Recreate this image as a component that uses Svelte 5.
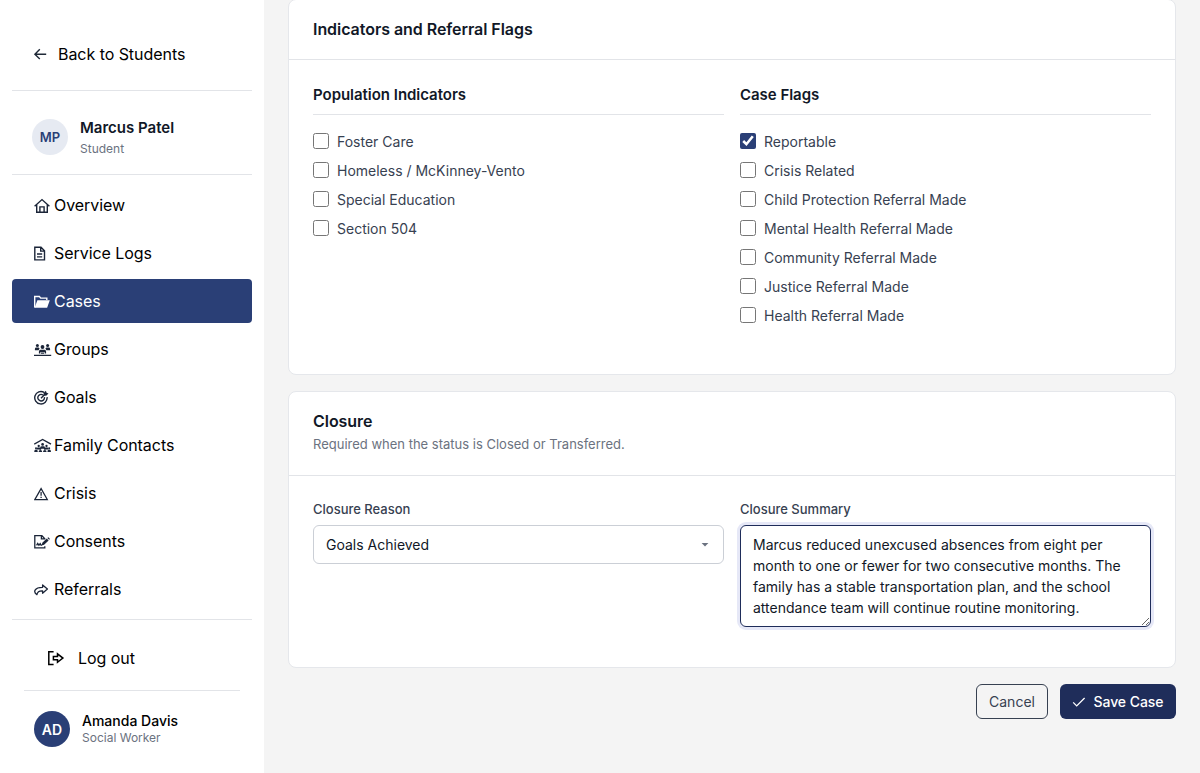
<script lang="ts">
  const nav = [
    { label: 'Overview', icon: 'home' },
    { label: 'Service Logs', icon: 'file' },
    { label: 'Cases', icon: 'folder' },
    { label: 'Groups', icon: 'groups' },
    { label: 'Goals', icon: 'goal' },
    { label: 'Family Contacts', icon: 'family' },
    { label: 'Crisis', icon: 'warning' },
    { label: 'Consents', icon: 'sign' },
    { label: 'Referrals', icon: 'share' }
  ];
  let active = $state('Cases');
  let population = $state([
    { label: 'Foster Care', on: false },
    { label: 'Homeless / McKinney-Vento', on: false },
    { label: 'Special Education', on: false },
    { label: 'Section 504', on: false }
  ]);
  let flags = $state([
    { label: 'Reportable', on: true },
    { label: 'Crisis Related', on: false },
    { label: 'Child Protection Referral Made', on: false },
    { label: 'Mental Health Referral Made', on: false },
    { label: 'Community Referral Made', on: false },
    { label: 'Justice Referral Made', on: false },
    { label: 'Health Referral Made', on: false }
  ]);
  let summary = $state(
    'Marcus reduced unexcused absences from eight per month to one or fewer for two consecutive months. The family has a stable transportation plan, and the school attendance team will continue routine monitoring.'
  );
</script>

{#snippet person(x: number, y: number, s: number)}
  <g transform="translate({x} {y}) scale({s})" fill="currentColor" stroke="none">
    <circle cx="0" cy="0" r="1.6" />
    <path d="M-2.8 5V3.8Q-2.8 2.1-1.1 2.1H1.1Q2.8 2.1 2.8 3.8V5Z" />
  </g>
{/snippet}

{#snippet icon(name: string)}
  <svg class="icon" width="18" height="17" viewBox="0 -1 18 17" fill="none" stroke="currentColor" stroke-width="1.4">
    {#if name === 'home'}
      <path d="M.6 8.3 8 1.6l7.4 6.7M2.7 6.8v7.5h10.6V6.8M5.9 14.2V8.9h4.2v5.3" />
    {:else if name === 'file'}
      <path d="M.8 1.3h6.2l3.5 3.5v9.1H.8ZM6.7 1.4v3.7h3.7M3 8h5.2M3 10.9h5.2" />
    {:else if name === 'folder'}
      <path d="M.7 13.4V2.5h4.7l1.3 1.6h6.1v2" />
      <path d="M.6 13.7 3.4 6.2h12.4L13.1 13.7Z" fill="currentColor" stroke="none" />
    {:else if name === 'groups'}
      <g fill="currentColor" stroke="none">
        <circle cx="3.4" cy="3.4" r="1.5" />
        <circle cx="13.6" cy="3.4" r="1.5" />
        <path d="M.9 8.3V6.9q0-1.4 1.4-1.4h2.3l1 1.1-1 1.7ZM16.1 8.3V6.9q0-1.4-1.4-1.4h-2.3l-1 1.1 1 1.7Z" />
        <circle cx="8.5" cy="5" r="1.9" />
        <path d="M4.9 11.6V9.4q0-1.7 1.7-1.7h3.8q1.7 0 1.7 1.7v2.2h-1.5V9.9H6.4v1.7Z" />
      </g>
      <path d="M7 11.2h3M0 13.3h17.2" stroke-width="1.3" />
    {:else if name === 'goal'}
      <path d="M10.1 2.4A6.2 6.2 0 1 0 13.1 7.1M8.8 4.8A3.3 3.3 0 1 0 10.4 7.2M7 8.2l4.4-4.4" />
      <path d="M9.6 5.5V3.1L11.9.8l.7 1.9 1.9.7L12.2 5.7Z" fill="currentColor" stroke="none" />
    {:else if name === 'family'}
      <path d="M.2 6.2 8.6 1.5l8.4 4.7" stroke-width="1.4" />
      {@render person(8.6, 6.4, 0.85)}
      {@render person(4.7, 8, 0.72)}
      {@render person(12.5, 8, 0.72)}
      <g fill="currentColor" stroke="none">
        <circle cx="2" cy="10.2" r="1" />
        <circle cx="6.4" cy="10.8" r="1" />
        <circle cx="10.8" cy="10.8" r="1" />
        <circle cx="15.2" cy="10.2" r="1" />
        <path d="M.2 13.9q0-2.3 1.8-2.3t1.8 2.3ZM4.6 13.9q0-2 1.8-2t1.8 2ZM9 13.9q0-2 1.8-2t1.8 2ZM13.4 13.9q0-2.3 1.8-2.3t1.8 2.3Z" />
      </g>
    {:else if name === 'warning'}
      <path d="M7.1 2.6 13.3 13.5H.9ZM7.1 6v3.7M7.1 10.8v1.3" stroke-width="1.25" />
    {:else if name === 'sign'}
      <path d="M10.8 5.6V4.7L7.9 1.6H.8v12.2h10v-1.6M7.4 1.8v3.1h3.2M2.6 11.4l1.1-2 1.2 1.8 1.3-1.5.8 1.4h1" stroke-width="1.3" />
      <path d="m7.7 11.5.6-2.7 4.5-4.2 1.8 1.9-4.5 4.2ZM13.4 4l.9-.8 1.7 1.8-.9.8Z" fill="currentColor" stroke="none" />
    {:else}
      <path d="M8.6 2.9 13.4 7.1l-4.8 4.1V8.9C5.3 8.7 3.4 9.9 2.9 12.7 1.1 11.5.3 9.7 1.1 8.1 2.3 6 5.1 5.3 8.6 5.3Z" stroke-width="1.3" stroke-linejoin="round" />
    {/if}
  </svg>
{/snippet}

<div class="page">
  <aside>
    <a class="back" href="#students">
      <svg width="14" height="14" viewBox="0 0 14 14" fill="none" stroke="currentColor" stroke-width="1.4"><path d="M13.2 7.2H2M6.8 2.3 1.9 7.2l4.9 4.9" /></svg>
      <span>Back to Students</span>
    </a>
    <div class="student">
      <div class="avatar light">MP</div>
      <div>
        <div class="name">Marcus Patel</div>
        <div class="role">Student</div>
      </div>
    </div>
    <nav>
      {#each nav as item}
        <button class="item" class:active={active === item.label} onclick={() => (active = item.label)}>
          <span class="slot">{@render icon(item.icon)}</span>
          <span>{item.label}</span>
        </button>
      {/each}
    </nav>
    <button class="logout">
      <svg width="18" height="16" viewBox="0 0 18 16" fill="none" stroke="currentColor" stroke-width="1.5"><path d="M6.6 1.8H1.8v12.6h4.8M6.4 6.4h4.1V3.9L15.9 8.1l-5.4 4.2V9.8H6.4Z" /></svg>
      <span>Log out</span>
    </button>
    <div class="user">
      <div class="avatar dark">AD</div>
      <div>
        <div class="uname">Amanda Davis</div>
        <div class="urole">Social Worker</div>
      </div>
    </div>
  </aside>

  <main>
    <section class="card first">
      <header><h2>Indicators and Referral Flags</h2></header>
      <div class="cols">
        <div>
          <h3>Population Indicators</h3>
          {#each population as p}
            <label class="check"><input type="checkbox" bind:checked={p.on} /><span>{p.label}</span></label>
          {/each}
        </div>
        <div>
          <h3>Case Flags</h3>
          {#each flags as f}
            <label class="check"><input type="checkbox" bind:checked={f.on} /><span>{f.label}</span></label>
          {/each}
        </div>
      </div>
    </section>

    <section class="card second">
      <header>
        <h2>Closure</h2>
        <p>Required when the status is Closed or Transferred.</p>
      </header>
      <div class="cols fields">
        <div>
          <div class="label">Closure Reason</div>
          <button class="select">
            <span>Goals Achieved</span>
            <svg width="8" height="4" viewBox="0 0 8 4"><path d="M.6 0h6.8L4 3.6Z" fill="#6b7280" /></svg>
          </button>
        </div>
        <div>
          <label class="label" for="summary">Closure Summary</label>
          <textarea id="summary" rows="4" spellcheck="false" bind:value={summary}></textarea>
        </div>
      </div>
    </section>

    <div class="actions">
      <button class="cancel">Cancel</button>
      <button class="save">
        <svg width="14" height="12" viewBox="0 0 14 12" fill="none" stroke="currentColor" stroke-width="1.3"><path d="m1.2 6.4 3.5 3.5L12.6 2" /></svg>
        <span>Save Case</span>
      </button>
    </div>
  </main>
</div>

<style>
  :global(body) { margin: 0; }
  .page, .page * { box-sizing: border-box; }
  .page {
    display: flex;
    height: 773px;
    overflow: hidden;
    background: #f4f4f4;
    font-family: Inter, "Liberation Sans", sans-serif;
    font-size: 14px;
    color: #111827;
  }
  button { font: inherit; border: 0; background: none; padding: 0; text-align: left; color: inherit; }
  aside { width: 264px; flex: none; background: #fff; padding: 18px 12px 0; color: #000; }
  .back {
    display: flex; align-items: center; gap: 11px; height: 73px;
    padding-left: 21px; border-bottom: 1px solid #e2e4e8;
    color: #000; font-size: 16px; letter-spacing: -0.05px; text-decoration: none;
  }
  .back svg { color: #1f2937; }
  .student {
    display: flex; align-items: center; gap: 12px; height: 84px;
    padding: 9px 20px 0; border-bottom: 1px solid #e2e4e8;
  }
  .student > div:last-child { margin-top: 1px; }
  .avatar {
    display: flex; align-items: center; justify-content: center;
    width: 36px; height: 36px; border-radius: 50%; font-weight: 600; flex: none;
  }
  .light { background: #e6eaf2; color: #2a3f76; font-size: 13px; }
  .dark { background: #2a3f76; color: #fff; font-size: 14px; }
  .name { font-size: 15px; font-weight: 600; line-height: 20px; color: #111827; }
  .role { font-size: 12px; line-height: 16px; margin-top: 3px; color: #6b7280; }
  nav { display: flex; flex-direction: column; gap: 4px; padding: 8px 0; border-bottom: 1px solid #e2e4e8; }
  .item {
    display: flex; align-items: center; height: 44px; padding-left: 22px;
    border-radius: 4px; font-size: 16px; line-height: 24px; letter-spacing: -0.05px;
  }
  .slot { display: flex; width: 20px; color: #1b2538; }
  .active { background: #2a3f76; color: #fff; }
  .active .slot { color: #fff; }
  .logout {
    display: flex; align-items: center; gap: 13px; width: 216px; height: 71px;
    margin: 0 12px; padding: 6px 0 0 23px; border-bottom: 1px solid #e2e4e8;
    font-size: 16px; letter-spacing: -0.05px;
  }
  .user { display: flex; align-items: center; gap: 12px; padding: 20px 22px 0; }
  .user > div:last-child { margin-top: -1px; }
  .uname { font-weight: 500; line-height: 18px; }
  .urole { font-size: 12px; line-height: 15px; color: #6b7280; }
  main { flex: 1; padding: 0 24px; }
  .card { background: #fff; border: 1px solid #e5e7eb; border-radius: 8px; }
  .first { height: 376px; margin-top: -1px; }
  .second { height: 277px; margin-top: 16px; }
  header { padding: 0 24px; border-bottom: 1px solid #e2e4e8; }
  .first header { height: 60px; padding-top: 17px; }
  .second header { height: 84px; padding-top: 17px; }
  h2 { margin: 0; font-size: 16px; line-height: 24px; font-weight: 600; letter-spacing: -0.05px; }
  p { margin: 2px 0 0; font-size: 13px; line-height: 18px; color: #6b7280; }
  .cols { display: grid; grid-template-columns: 411px 411px; gap: 16px; padding: 24px 24px 0; }
  h3 {
    margin: 0 0 12px; height: 31px; border-bottom: 1px solid #e2e4e8;
    font-size: 15px; line-height: 22px; font-weight: 600; letter-spacing: -0.03px;
  }
  .check { display: flex; align-items: center; gap: 8px; height: 29px; color: #374151; line-height: 21px; }
  .check input { width: 16px; height: 16px; margin: -2px 0 0; accent-color: #2a3f76; }
  .label { display: block; font-size: 13px; line-height: 18px; font-weight: 500; color: #374151; margin-bottom: 7px; }
  .select {
    display: flex; align-items: center; justify-content: space-between;
    width: 100%; height: 39px; padding: 0 14px 0 12px;
    border: 1px solid #cbcfd6; border-radius: 6px; background: #fff; color: #111827;
  }
  textarea {
    display: block; width: 100%; height: 102px; margin: 0; padding: 8px 12px;
    border: 1px solid #1f2d5a; border-radius: 6px; outline: none; background: #fff;
    box-shadow: 0 0 0 3px #e6e8f7; color: #111827;
    font-family: inherit; font-size: 14px; line-height: 21px; resize: vertical; overflow: hidden;
  }
  .actions { display: flex; justify-content: flex-end; gap: 12px; margin-top: 16px; }
  .actions button { display: flex; align-items: center; justify-content: center; height: 35px; border-radius: 6px; }
  .cancel { width: 72px; border: 1px solid #374151; color: #374151; }
  .save { width: 116px; gap: 7px; background: #1f2d5a; color: #fff; font-weight: 500; letter-spacing: -0.05px; }
</style>
